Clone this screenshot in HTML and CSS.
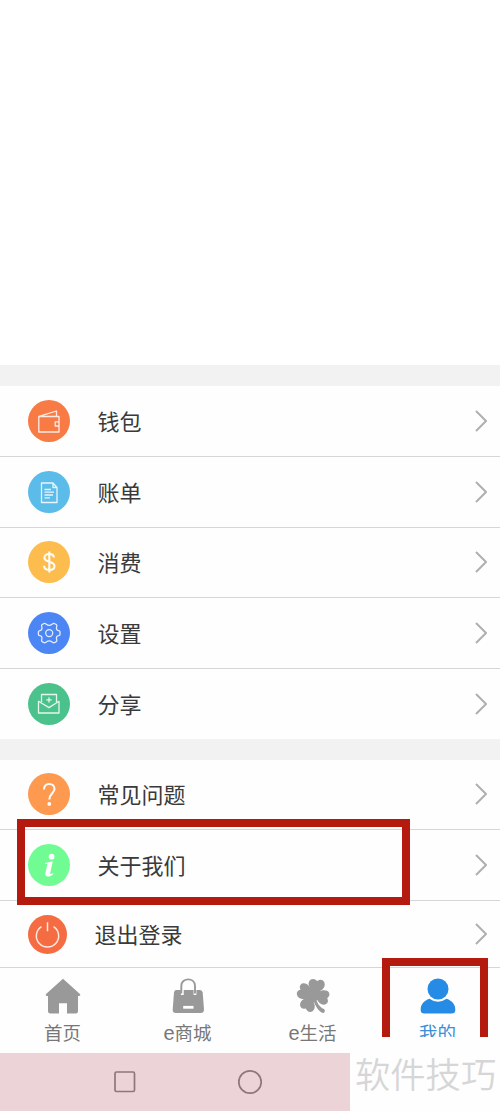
FILE: index.html
```html
<!DOCTYPE html>
<html lang="zh-CN">
<head>
<meta charset="utf-8">
<title>我的</title>
<link rel="stylesheet" href="styles.css">
</head>
<body>
<div class="screen">
  <header class="profile"></header>
  <ul class="menu">
    <li class="row">
      <svg class="badge" viewBox="0 0 42 42"><circle class="orange" cx="21" cy="21" r="21"/><path class="line" d="M10.8 16.5H31V32H10.8ZM11 16.3L28.5 11V16M31 21.8H27.2V26H31"/></svg>
      <span class="label">钱包</span>
      <svg class="chevron" viewBox="0 0 12 22"><path d="M1 1L11 11L1 21"/></svg>
    </li>
    <li class="row">
      <svg class="badge" viewBox="0 0 42 42"><circle class="sky" cx="21" cy="21" r="21"/><path class="line" d="M13.5 12H25L29 16.5V31.5H13.5ZM25 12V16.5H29M16.5 18.5H23M16.5 21.2H26M16.5 24H25M16.5 26.8H22"/></svg>
      <span class="label">账单</span>
      <svg class="chevron" viewBox="0 0 12 22"><path d="M1 1L11 11L1 21"/></svg>
    </li>
    <li class="row">
      <svg class="badge" viewBox="0 0 42 42"><circle class="amber" cx="21" cy="21" r="21"/><path class="line thick" d="M26 16.5C25.7 13.8 23.8 13 21.3 13C18.4 13 16.4 14.3 16.4 16.7C16.4 22 26.5 19.3 26.5 25C26.5 27.7 24.4 29 21.4 29C18.2 29 16.2 27.6 16 24.8M21.3 10.5V31.5"/></svg>
      <span class="label">消费</span>
      <svg class="chevron" viewBox="0 0 12 22"><path d="M1 1L11 11L1 21"/></svg>
    </li>
    <li class="row">
      <svg class="badge" viewBox="0 0 42 42"><circle class="blue" cx="21" cy="21" r="21"/><path class="line" d="M16 11.5C18 10.8 18.4 13.4 21.2 13.4C24 13.4 24.4 10.8 26.4 11.5L28.6 12.8C29.6 14 27.5 15.5 28.8 17.6C29.7 19 32 18.2 32 19.8V22.4C32 24 29.7 23.2 28.8 24.6C27.5 26.7 29.6 28.2 28.6 29.4L26.4 30.7C24.4 31.4 24 28.8 21.2 28.8C18.4 28.8 18 31.4 16 30.7L13.8 29.4C12.8 28.2 14.9 26.7 13.6 24.6C12.7 23.2 10.4 24 10.4 22.4V19.8C10.4 18.2 12.7 19 13.6 17.6C14.9 15.5 12.8 14 13.8 12.8Z"/><circle class="line" cx="21.2" cy="21.1" r="3.5"/></svg>
      <span class="label">设置</span>
      <svg class="chevron" viewBox="0 0 12 22"><path d="M1 1L11 11L1 21"/></svg>
    </li>
    <li class="row short">
      <svg class="badge" viewBox="0 0 42 42"><circle class="green" cx="21" cy="21" r="21"/><path class="line" d="M13.5 19V11.5H28.5V19M10.5 18.3V30H31V18.3L21 24.6ZM21 14.2V19.6M18.3 16.9H23.7"/></svg>
      <span class="label">分享</span>
      <svg class="chevron" viewBox="0 0 12 22"><path d="M1 1L11 11L1 21"/></svg>
    </li>
  </ul>
  <ul class="menu">
    <li class="row">
      <svg class="badge" viewBox="0 0 42 42"><circle class="apricot" cx="21" cy="21" r="21"/><path class="line thick" d="M16 16.5C16 12.8 18 11 21.2 11C24.2 11 26.5 12.9 26.5 16C26.5 20 21.3 20.8 21.3 26.5"/><circle class="dot" cx="21.3" cy="30.9" r="1.9"/></svg>
      <span class="label">常见问题</span>
      <svg class="chevron" viewBox="0 0 12 22"><path d="M1 1L11 11L1 21"/></svg>
    </li>
    <li class="row">
      <svg class="badge" viewBox="0 0 42 42"><circle class="mint" cx="21" cy="21" r="21"/><circle class="dot" cx="23.6" cy="12.7" r="2.9"/><path class="dot" d="M17 19L24.8 17.3L22.2 29.2C22 30.6 23.3 30.4 25.3 29L25.5 30C23.5 31.6 21.7 32.6 19.7 32.6C17.7 32.6 16.9 31.2 17.4 29L19.3 20.5C19.5 19.6 18.7 19.7 17 20Z"/></svg>
      <span class="label">关于我们</span>
      <svg class="chevron" viewBox="0 0 12 22"><path d="M1 1L11 11L1 21"/></svg>
    </li>
    <li class="row logout">
      <svg class="badge" viewBox="0 0 42 42"><circle class="coral" cx="21" cy="21" r="21"/><path class="line power" d="M14.500 12.500A12 12 0 1 0 27.500 12.500M21 7.8V17.500"/></svg>
      <span class="label">退出登录</span>
      <svg class="chevron" viewBox="0 0 12 22"><path d="M1 1L11 11L1 21"/></svg>
    </li>
  </ul>
  <nav class="tabs">
    <div class="tab">
      <svg class="tab-icon" viewBox="0 0 36 36"><path d="M18 .8L35.2 16.2Q35.8 18 34 18H33V33Q33 35.5 30.5 35.5H22V25.3H14V35.5H5.5Q3 35.5 3 33V18H2Q.2 18 .8 16.2Z"/></svg>
      <span>首页</span>
    </div>
    <div class="tab">
      <svg class="tab-icon" viewBox="0 0 36 36"><path d="M6 12H30Q32.3 12 32.7 14.5L34 31.5Q34 35 30.5 35H6Q2.500 35 2.700 31.500L4 14.500Q4.300 12 6 12Z"/><path class="gap" d="M12.300 17V10M25 17V10"/><path class="gap" d="M13.200 29.300H23.500"/><path class="handle" d="M11.300 15.500V8C11.300-.8 25-.8 25 8V15.500"/></svg>
      <span><span class="latin">e</span>商城</span>
    </div>
    <div class="tab">
      <svg class="tab-icon" viewBox="0 0 36 36"><g><ellipse cx="18.500" cy="6.300" rx="4.800" ry="5.500" transform="rotate(-22 18.500 6.300)"/><ellipse cx="24.500" cy="7.500" rx="4.800" ry="6" transform="rotate(35 24.500 7.500)"/><ellipse cx="28.500" cy="16.800" rx="6" ry="4.600" transform="rotate(-10 28.500 16.800)"/><ellipse cx="27.500" cy="21.500" rx="6" ry="4.600" transform="rotate(40 27.500 21.500)"/><ellipse cx="15" cy="28" rx="4.700" ry="6" transform="rotate(-8 15 28)"/><ellipse cx="10.500" cy="25.500" rx="4.700" ry="6" transform="rotate(48 10.500 25.500)"/><ellipse cx="7.500" cy="16.300" rx="5.800" ry="4.600" transform="rotate(15 7.500 16.300)"/><ellipse cx="10.200" cy="10.500" rx="6" ry="4.500" transform="rotate(40 10.200 10.500)"/><path d="M16 9L23 10L27 15L26 23L21.500 22C23 27 25.500 29.500 29 31Q30.500 32.500 29.500 34.200Q28.500 35.500 26.500 34.500C23 32.500 20.500 28 19 24L15 28L11 23L9 18L12 11Z"/></g></svg>
      <span><span class="latin">e</span>生活</span>
    </div>
    <div class="tab active">
      <svg class="tab-icon" viewBox="0 0 36 36"><circle cx="18" cy="11" r="10.5"/><path d="M9.5 20.8Q13.5 23.8 18 23.8Q22.5 23.8 26.5 20.8C32.5 22.8 35.5 27 35.3 32Q35.3 35.5 31.5 35.5H4.5Q.7 35.5 .7 32C.5 27 3.5 22.8 9.5 20.8Z"/></svg>
      <span>我的</span>
    </div>
  </nav>
  <footer class="system">
    <svg class="keys" viewBox="0 0 350 58"><rect x="115" y="19" width="19.500" height="19.500" rx="1.500"/><circle cx="250" cy="29" r="11.200"/></svg>
  </footer>
  <div class="watermark">软件技巧</div>
  <div class="mark about"></div>
  <div class="mark mine"></div>
</div>
</body>
</html>
```
FILE: styles.css
```css
* { box-sizing: border-box; }
body { margin: 0; background: #fefefe; font-family: "Noto Sans CJK SC", sans-serif; }
.screen { position: relative; width: 500px; height: 1111px; overflow: hidden; display: flex; flex-direction: column; }
.profile { height: 365px; flex: none; background: #fff; }
.menu { list-style: none; margin: 0; padding: 0; border-top: 21px solid #f2f2f2; }
.row { display: flex; align-items: center; height: 71px; padding: 0 13px 1px 27.5px; border-bottom: 1px solid #d6d6d6; }
.menu:nth-of-type(1) .row:nth-child(3) { height: 70px; }
.menu:nth-of-type(2) .row:nth-child(1) { height: 70px; }
.row.short { height: 70px; border-bottom: 0; }
.row.logout { height: 67px; padding-bottom: 0; }
.badge { width: 42px; height: 42px; flex: none; }
.logout .badge { width: 39px; height: 39px; }
.label { flex: 1; margin-left: 28px; padding-bottom: 2px; font-size: 22px; line-height: 32px; color: #3a3a3a; }
.chevron { width: 12px; height: 22px; fill: none; stroke: #b0b0b0; stroke-width: 2; }
.orange { fill: #f87b45; }
.sky { fill: #5bbce9; }
.amber { fill: #fdbd4e; }
.blue { fill: #4c86f5; }
.green { fill: #4bc28b; }
.apricot { fill: #fd9a50; }
.mint { fill: #70fc92; }
.coral { fill: #f56c43; }
.line { fill: none; stroke: #fff; stroke-opacity: .85; stroke-width: 1.3; stroke-linejoin: round; }
.thick { stroke-width: 2.1; stroke-opacity: .95; }
.power { stroke-width: 1.6; }
.dot { fill: #fff; }
.tabs { display: flex; height: 85px; flex: none; }
.tab { width: 125px; display: flex; flex-direction: column; align-items: center; padding-top: 10px; font-size: 18.5px; line-height: 28px; color: #777; }
.latin { font-family: "Liberation Sans", sans-serif; font-size: 20px; }
.tab-icon { width: 36px; height: 36px; flex: none; margin-bottom: 4px; fill: #999; }
.gap { fill: none; stroke: #fff; stroke-width: 2.8; }
.handle { fill: none; stroke: #999; stroke-width: 1.9; }
.active { height: 69px; overflow: hidden; color: #3a8fd6; }
.active .tab-icon { fill: #268be5; }
.system { width: 350px; height: 58px; background: #ecd3d7; }
.keys { display: block; width: 350px; height: 58px; fill: none; stroke: #8e777a; stroke-width: 1.7; }
.watermark { position: absolute; left: 355px; top: 1048px; font-size: 35.3px; line-height: 50px; font-weight: 350; color: #d6d6d6; white-space: nowrap; }
.mark { position: absolute; border: 8px solid #b51a0e; }
.about { left: 17px; top: 819px; width: 393px; height: 86px; }
.mine { left: 382px; top: 958px; width: 106px; height: 79px; border-bottom: 0; }
```
